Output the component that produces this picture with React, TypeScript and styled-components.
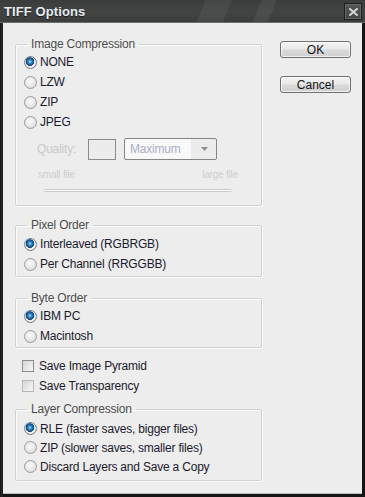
import React from "react";
import styled, { createGlobalStyle } from "styled-components";

const GlobalStyle = createGlobalStyle`
    html, body {
        margin: 0;
        padding: 0;
        background: #1c1c1c;
    }
    * {
        box-sizing: border-box;
    }
`

const Window = styled.div`
    width: 365px;
    height: 497px;
    display: flex;
    flex-direction: column;
    overflow: hidden;
    background: linear-gradient(90deg, #161616 0, #2a2a2a 2px, #161616 3px);
    font-family: "Liberation Sans", Arial, sans-serif;
    font-size: 12px;
    letter-spacing: -0.2px;
`

const TitleBar = styled.div`
    height: 23px;
    flex: none;
    display: flex;
    align-items: center;
    justify-content: space-between;
    padding: 0 3px 0 4px;
    background:
        linear-gradient(112deg, transparent 0 55%, rgba(255,255,255,0.05) 55% 62%, transparent 62% 70%, rgba(255,255,255,0.06) 70% 74%, transparent 74%),
        linear-gradient(180deg, #3a3c3c 0, #424444 50%, #3c3e3e 100%);
    border-bottom: 1px solid #6b6e6e;
`

const Title = styled.span`
    color: #e6edf3;
    font-weight: bold;
    font-size: 13px;
    letter-spacing: 0.1px;
    text-shadow: 0 1px 1px rgba(0,0,0,0.6);
`

const CloseButton = styled.div`
    width: 18px;
    height: 17px;
    display: flex;
    align-items: center;
    justify-content: center;
    border: 1px solid #1e1e1e;
    box-shadow: inset 0 0 0 1px #646666;
    background: linear-gradient(180deg, #555757, #444646);
    margin-top: 1px;
`

const Body = styled.div`
    flex: 1;
    display: flex;
    margin: 0 3px 3px 3px;
    padding: 14px 0 0 12px;
    background: #ededed;
    border-bottom: 1px solid #bdbdbd;
`

const LeftColumn = styled.div`
    width: 247px;
    display: flex;
    flex-direction: column;
`

const RightColumn = styled.div`
    display: flex;
    flex-direction: column;
    gap: 18px;
    margin-left: 18px;
    padding-top: 4px;
`

const Group = styled.fieldset<{ $top?: number; $pt?: number; $pb?: number }>`
    margin: ${p => p.$top ?? 0}px 0 0 0;
    padding: ${p => p.$pt ?? 0}px 8px ${p => p.$pb ?? 2}px 8px;
    min-width: 0;
    width: 247px;
    border: 1px solid #d2d2d2;
    border-radius: 2px;
    box-shadow: inset 1px 1px 0 #fbfbfb, 1px 1px 0 #fbfbfb;
`

const Legend = styled.legend`
    padding: 0 4px;
    margin-left: 3px;
    line-height: 14px;
    color: #4e4e4e;
`

const Option = styled.label<{ $h?: number }>`
    display: flex;
    align-items: center;
    height: ${p => p.$h ?? 20}px;
    color: #1b1b2c;
    white-space: nowrap;
`

const Radio = styled.span<{ $on?: boolean }>`
    width: 13px;
    height: 13px;
    flex: none;
    border-radius: 50%;
    margin-right: 3px;
    border: 1px solid ${p => (p.$on ? "#6f7e8c" : "#9a9c9e")};
    background: ${p =>
        p.$on
            ? "radial-gradient(circle at 45% 42%, #bfe6ff 0, #3b8fd0 1.6px, #114f8e 3.6px, #1a4a78 4.1px, #f2f2f2 4.6px, #d9d9d9 100%)"
            : "radial-gradient(circle at 45% 40%, #fbfbfb 0, #e8e8e8 50%, #cfcfcf 100%)"};
`

const Check = styled.span<{ $faint?: boolean }>`
    width: 12px;
    height: 12px;
    flex: none;
    margin-right: 5px;
    border: 1px solid ${p => (p.$faint ? "#b9b9b9" : "#8d8d8d")};
    background: linear-gradient(135deg, #d6d6d6, #f7f7f7);
`

const CheckRow = styled(Option)`
    padding-left: 7px;
`

const QualityRow = styled.div`
    display: flex;
    align-items: center;
    height: 22px;
    margin-top: 6px;
    padding-left: 13px;
`

const Dim = styled.span`
    width: 51px;
    color: #c9c9c9;
    font-size: 12px;
`

const QualityBox = styled.div`
    width: 28px;
    height: 21px;
    border: 1px solid #8a8a8a;
    background: #ececec;
    margin-right: 8px;
`

const Select = styled.div`
    width: 93px;
    height: 22px;
    display: flex;
    align-items: center;
    justify-content: space-between;
    padding: 0 8px 0 5px;
    border: 1px solid #858585;
    border-radius: 2px;
    background: linear-gradient(90deg, #f9f9f9 0 72%, #ececec 72%);
    color: #a9afc6;
`

const SizeLabels = styled.div`
    display: flex;
    justify-content: space-between;
    margin: 9px 0 0 14px;
    width: 200px;
    font-size: 10px;
    line-height: 12px;
    color: #cdcdcd;
`

const Track = styled.div`
    height: 3px;
    width: 188px;
    margin: 8px 0 13px 20px;
    border: 1px solid #c9c9c9;
    border-radius: 2px;
    background: #fafafa;
`

const CheckList = styled.div`
    display: flex;
    flex-direction: column;
    margin-top: 8px;
`

const Button = styled.button`
    width: 71px;
    height: 17px;
    padding: 0;
    font-family: "Liberation Sans", Arial, sans-serif;
    font-size: 12px;
    line-height: 14px;
    color: #111;
    border: 1px solid #707070;
    border-radius: 3px;
    background: linear-gradient(180deg, #f3f3f3 0, #e9e9e9 48%, #dadada 52%, #d0d0d0 100%);
    box-shadow: inset 0 0 0 1px rgba(255,255,255,0.7);
`

function CloseGlyph() {
    return (
        <svg width="9" height="8" viewBox="0 0 9 8">
            <path d="M1 1 L8 7 M8 1 L1 7" stroke="#d0d5da" strokeWidth="2" strokeLinecap="square" />
        </svg>
    )
}

function DropArrow() {
    return (
        <svg width="7" height="4" viewBox="0 0 7 4">
            <path d="M0 0 H7 L3.5 4 Z" fill="#8d8d8d" />
        </svg>
    )
}

type RadioItem = { label: string; on?: boolean }

function RadioList({ items, h }: { items: RadioItem[]; h?: number }) {
    return (
        <>
            {items.map(it => (
                <Option key={it.label} $h={h}>
                    <Radio $on={it.on} />
                    {it.label}
                </Option>
            ))}
        </>
    )
}

export default function App() {
    return (
        <>
            <GlobalStyle />
            <Window>
                <TitleBar>
                    <Title>TIFF Options</Title>
                    <CloseButton>
                        <CloseGlyph />
                    </CloseButton>
                </TitleBar>
                <Body>
                    <LeftColumn>
                        <Group $pt={1} $pb={0}>
                            <Legend>Image Compression</Legend>
                            <RadioList items={[
                                { label: "NONE", on: true },
                                { label: "LZW" },
                                { label: "ZIP" },
                                { label: "JPEG" },
                            ]} />
                            <QualityRow>
                                <Dim>Quality:</Dim>
                                <QualityBox />
                                <Select>
                                    <span>Maximum</span>
                                    <DropArrow />
                                </Select>
                            </QualityRow>
                            <SizeLabels>
                                <span>small file</span>
                                <span>large file</span>
                            </SizeLabels>
                            <Track />
                        </Group>

                        <Group $top={12} $pt={2} $pb={2}>
                            <Legend>Pixel Order</Legend>
                            <RadioList items={[
                                { label: "Interleaved (RGBRGB)", on: true },
                                { label: "Per Channel (RRGGBB)" },
                            ]} />
                        </Group>

                        <Group $top={14} $pt={1} $pb={1}>
                            <Legend>Byte Order</Legend>
                            <RadioList items={[
                                { label: "IBM PC", on: true },
                                { label: "Macintosh" },
                            ]} />
                        </Group>

                        <CheckList>
                            <CheckRow>
                                <Check />
                                Save Image Pyramid
                            </CheckRow>
                            <CheckRow>
                                <Check $faint />
                                Save Transparency
                            </CheckRow>
                        </CheckList>

                        <Group $top={6} $pt={3} $pb={4}>
                            <Legend>Layer Compression</Legend>
                            <RadioList h={19} items={[
                                { label: "RLE (faster saves, bigger files)", on: true },
                                { label: "ZIP (slower saves, smaller files)" },
                                { label: "Discard Layers and Save a Copy" },
                            ]} />
                        </Group>
                    </LeftColumn>
                    <RightColumn>
                        <Button>OK</Button>
                        <Button>Cancel</Button>
                    </RightColumn>
                </Body>
            </Window>
        </>
    )
}
